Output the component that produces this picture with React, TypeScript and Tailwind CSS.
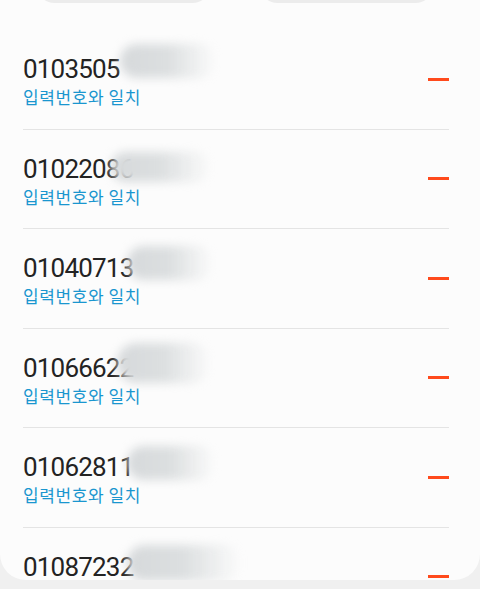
import React from "react";

interface Contact {
  number: string;
  blobLeft: number;
  blobTop: number;
  blobWidth: number;
  blobHeight: number;
}

const contacts: Contact[] = [
  { number: "0103505", blobLeft: 97, blobTop: 14, blobWidth: 96, blobHeight: 34 },
  { number: "01022086", blobLeft: 88, blobTop: 22, blobWidth: 100, blobHeight: 30 },
  { number: "01040713", blobLeft: 104, blobTop: 17, blobWidth: 86, blobHeight: 34 },
  { number: "01066622", blobLeft: 94, blobTop: 14, blobWidth: 94, blobHeight: 40 },
  { number: "01062811", blobLeft: 104, blobTop: 18, blobWidth: 88, blobHeight: 34 },
  { number: "01087232", blobLeft: 104, blobTop: 17, blobWidth: 114, blobHeight: 36 },
];

const Row = ({ contact }: { contact: Contact }) => {
  return (
    <li className="h-[99.5px] shrink-0 border-b border-[#e4e4e4] flex justify-between">
      <div className="relative pt-[25px]">
        <p className="text-[26px] leading-[28px] tracking-[-0.8px] text-[#232323] font-['Roboto',sans-serif]">
          {contact.number}
        </p>
        <p className="mt-[3px] text-[17px] leading-[21px] tracking-[0.6px] text-[#1a96cf] font-['Noto_Sans_CJK_KR','Noto_Sans',sans-serif]">
          입력번호와 일치
        </p>
        {/* 가려진 번호 */}
        <div
          className="absolute rounded-full bg-gradient-to-r from-[#d6d9db] via-[#dcdfe0] to-[#fcfcfc00] blur-[5px]"
          style={{
            left: contact.blobLeft,
            top: contact.blobTop,
            width: contact.blobWidth,
            height: contact.blobHeight,
          }}
        />
      </div>
      <div className="flex items-center">
        <span className="block w-[21px] h-[3px] bg-[#ff4a1c]" />
      </div>
    </li>
  );
};

const App = () => {
  return (
    <div className="w-[480px] h-[589px] bg-[#f0f0f0] overflow-hidden">
      <div className="h-[580px] bg-[#fcfcfc] rounded-b-[26px] overflow-hidden flex flex-col">
        <div className="h-[3px] overflow-hidden flex items-end gap-[46px] pl-[35px] shrink-0">
          <div className="w-[177px] h-[40px] shrink-0 rounded-full bg-[#ececec]" />
          <div className="w-[177px] h-[40px] shrink-0 rounded-full bg-[#ececec]" />
        </div>
        <ul className="mt-[27px] pl-[23px] pr-[31px] flex flex-col">
          {contacts.map((contact, index) => (
            <Row key={index} contact={contact} />
          ))}
        </ul>
      </div>
    </div>
  );
};

export default App;
